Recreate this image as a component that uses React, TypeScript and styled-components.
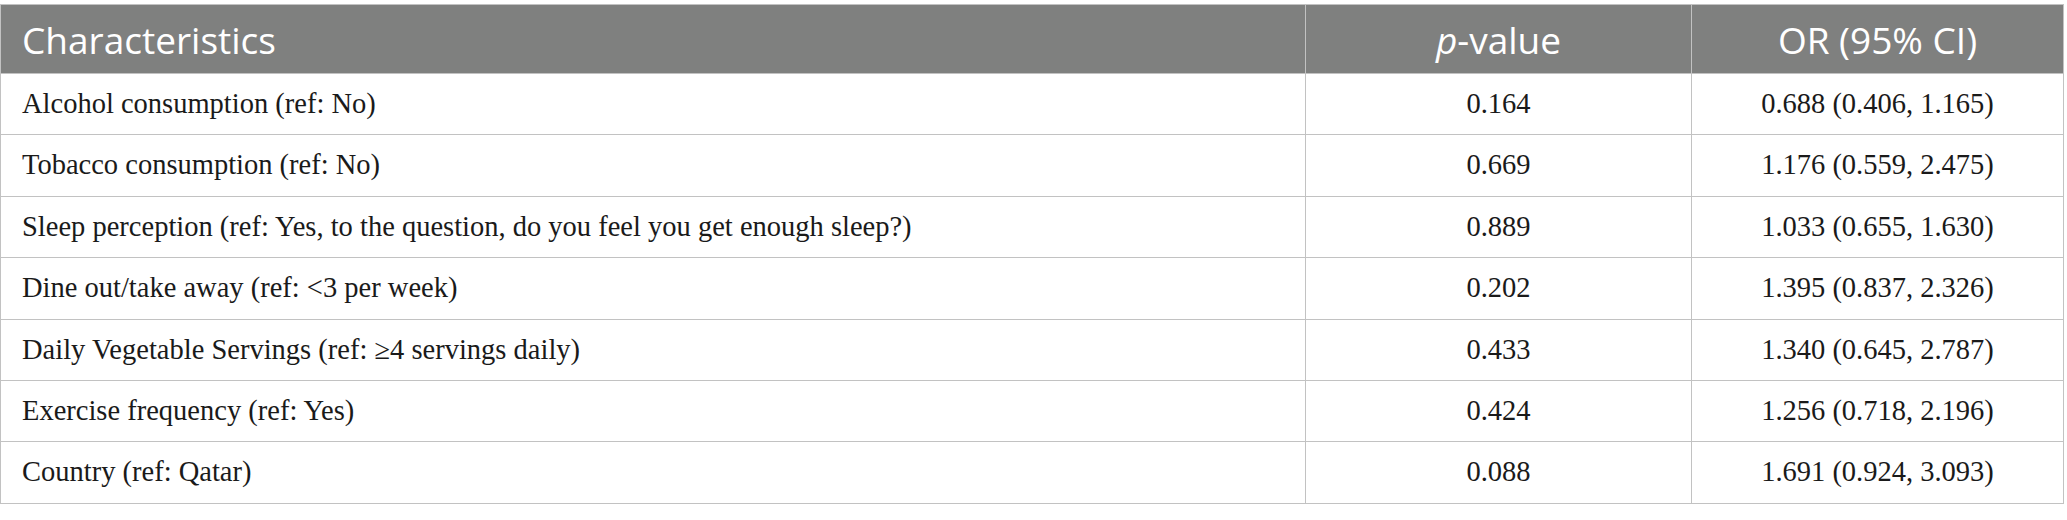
import React from "react";
import styled, { createGlobalStyle } from "styled-components";

const Global = createGlobalStyle`
  html, body { margin: 0; padding: 0; background: #ffffff; }
  body { padding-top: 4px; }
`;

const Table = styled.table`
  width: 2063px;
  border-collapse: collapse;
  table-layout: fixed;
  border: 1px solid #c2c2c2;
`;

const HeadRow = styled.tr`
  height: 69px;
  background: #7f807f;
`;

const HeadCell = styled.th<{ $align?: "left" | "center" }>`
  font-family: "Open Sans", "Liberation Sans", sans-serif;
  font-weight: 400;
  font-size: 37px;
  line-height: 1;
  color: #ffffff;
  text-align: ${(p) => p.$align ?? "center"};
  padding: 0 21px;
  border: 1px solid #c2c2c2;
  border-top: none;
  border-bottom: none;
  vertical-align: middle;
  white-space: nowrap;
`;

const Row = styled.tr`
  height: 61.4px;
`;

const Cell = styled.td<{ $align?: "left" | "center" }>`
  font-family: "Liberation Serif", "Times New Roman", serif;
  font-size: 28.5px;
  line-height: 1;
  color: #1a1a1a;
  text-align: ${(p) => p.$align ?? "center"};
  padding: 0 21px;
  border: 1px solid #c2c2c2;
  vertical-align: middle;
  white-space: nowrap;
`;

const Italic = styled.i`
  font-style: italic;
`;

const rows: [string, string, string][] = [
  ["Alcohol consumption (ref: No)", "0.164", "0.688 (0.406, 1.165)"],
  ["Tobacco consumption (ref: No)", "0.669", "1.176 (0.559, 2.475)"],
  [
    "Sleep perception (ref: Yes, to the question, do you feel you get enough sleep?)",
    "0.889",
    "1.033 (0.655, 1.630)",
  ],
  ["Dine out/take away (ref: <3 per week)", "0.202", "1.395 (0.837, 2.326)"],
  ["Daily Vegetable Servings (ref: \u22654 servings daily)", "0.433", "1.340 (0.645, 2.787)"],
  ["Exercise frequency (ref: Yes)", "0.424", "1.256 (0.718, 2.196)"],
  ["Country (ref: Qatar)", "0.088", "1.691 (0.924, 3.093)"],
];

export default function App() {
  return (
    <>
      <Global />
      <Table>
        <colgroup>
          <col style={{ width: 1305 }} />
          <col style={{ width: 386 }} />
          <col style={{ width: 372 }} />
        </colgroup>
        <thead>
          <HeadRow>
            <HeadCell $align="left">Characteristics</HeadCell>
            <HeadCell>
              <Italic>p</Italic>-value
            </HeadCell>
            <HeadCell>OR (95% CI)</HeadCell>
          </HeadRow>
        </thead>
        <tbody>
          {rows.map(([c, p, or]) => (
            <Row key={c}>
              <Cell $align="left">{c}</Cell>
              <Cell>{p}</Cell>
              <Cell>{or}</Cell>
            </Row>
          ))}
        </tbody>
      </Table>
    </>
  );
}
